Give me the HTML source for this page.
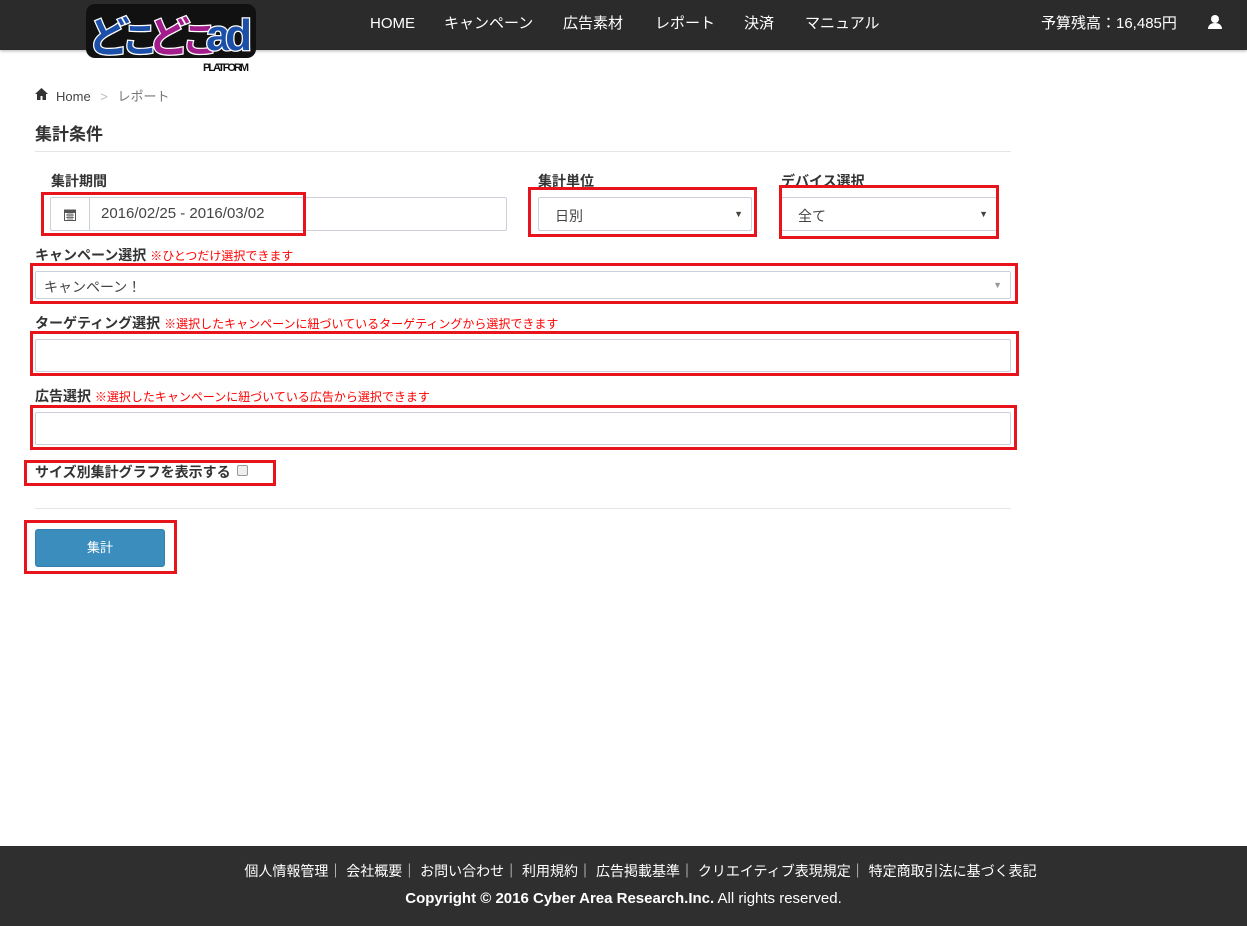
<!DOCTYPE html>
<html><head><meta charset="utf-8"><style>
*{box-sizing:border-box;margin:0;padding:0}
body{width:1247px;height:926px;position:relative;background:#fff;font-family:"Liberation Sans","Noto Sans CJK JP",sans-serif;color:#333;overflow:hidden}
.a{position:absolute}
.hdr{left:0;top:0;width:1247px;height:50px;background:#2b2b2b;box-shadow:0 1px 3px rgba(0,0,0,.3)}
.nav{top:13px;color:#fff;font-size:15px;line-height:22px}
.red{position:absolute;border:3px solid #e8141c}
.inp{position:absolute;border:1px solid #ccd0da;background:#fff;border-radius:2px}
.lbl{position:absolute;font-size:14px;font-weight:bold;color:#333;line-height:18px}
.note{color:#f00;font-weight:normal;font-size:12px}
.sel{font-size:14px;color:#444;padding:8px 0 0 16px}
.arr{position:absolute;right:8px;top:11px;font-size:9px;color:#444}
.ft{left:0;top:846px;width:1247px;height:80px;background:#2f2f2f;color:#fff;text-align:center}
</style></head><body>
<div class="a hdr"></div>
<div class="a" style="left:86px;top:2px;width:170px;height:72px">
<svg width="170" height="72" viewBox="0 0 170 72">
<rect x="0" y="2" width="170" height="54" rx="9" fill="#111"/>
<text x="2" y="50" font-family="Liberation Sans,Noto Sans CJK JP,sans-serif" font-size="42" font-weight="bold" fill="#1c4fa8" stroke="#fff" stroke-width="2.5" paint-order="stroke">ど</text>
<text x="36" y="50" font-family="Liberation Sans,Noto Sans CJK JP,sans-serif" font-size="36" font-weight="bold" fill="#1c4fa8" stroke="#fff" stroke-width="2.5" paint-order="stroke">こ</text>
<text x="62" y="50" font-family="Liberation Sans,Noto Sans CJK JP,sans-serif" font-size="42" font-weight="bold" fill="#a21c8c" stroke="#fff" stroke-width="2.5" paint-order="stroke">ど</text>
<text x="96" y="50" font-family="Liberation Sans,Noto Sans CJK JP,sans-serif" font-size="36" font-weight="bold" fill="#a21c8c" stroke="#fff" stroke-width="2.5" paint-order="stroke">こ</text>
<text x="120" y="48" font-family="Liberation Sans,sans-serif" font-size="44" font-weight="bold" fill="#1c4fa8" stroke="#fff" stroke-width="2.5" paint-order="stroke" textLength="46">ad</text>
<text x="117" y="69" font-family="Liberation Sans,sans-serif" font-size="11" font-weight="bold" fill="#111" textLength="46">PLATFORM</text>
</svg></div>
<div class="a nav" style="left:370px">HOME</div>
<div class="a nav" style="left:444px">キャンペーン</div>
<div class="a nav" style="left:563px">広告素材</div>
<div class="a nav" style="left:655px">レポート</div>
<div class="a nav" style="left:744px">決済</div>
<div class="a nav" style="left:805px">マニュアル</div>
<div class="a nav" style="left:1041px;font-size:15px">予算残高：16,485円</div>
<svg class="a" style="left:1207px;top:14px" width="16" height="16" viewBox="0 0 16 16"><circle cx="8" cy="5" r="4" fill="#fff"/><path d="M1 15c0-4 3-6 7-6s7 2 7 6z" fill="#fff"/></svg>

<svg class="a" style="left:35px;top:88px" width="13" height="12" viewBox="0 0 13 12"><path d="M6.5 0L0 6h2v6h3.5V8h2v4H11V6h2z" fill="#333"/></svg>
<div class="a" style="left:56px;top:86px;font-size:13px;color:#444">Home <span style="color:#bbb;margin:0 6px">&gt;</span> <span style="color:#777">レポート</span></div>
<div class="a" style="left:35px;top:120px;font-size:17px;font-weight:bold">集計条件</div>
<div class="a" style="left:35px;top:151px;width:976px;border-top:1px solid #e5e5e5"></div>

<div class="lbl" style="left:51px;top:172px">集計期間</div>
<div class="inp" style="left:50px;top:197px;width:457px;height:34px"><div style="position:absolute;left:38px;top:0;bottom:0;border-left:1px solid #ccd0da"></div>
<svg style="position:absolute;left:13px;top:10px" width="12" height="13" viewBox="0 0 12 13"><rect x="0.5" y="2" width="11" height="10.5" fill="none" stroke="#555"/><rect x="0" y="2" width="12" height="3" fill="#555"/><path d="M2 7h8M2 9.5h8M4 5v7M6 5v7M8 5v7" stroke="#555" stroke-width=".8"/></svg>
<div style="position:absolute;left:50px;top:7px;font-size:15px;color:#444">2016/02/25 - 2016/03/02</div></div>
<div class="lbl" style="left:538px;top:172px">集計単位</div>
<div class="inp sel" style="left:538px;top:197px;width:214px;height:34px">日別<span class="arr">▼</span></div>
<div class="lbl" style="left:781px;top:172px">デバイス選択</div>
<div class="inp sel" style="left:781px;top:197px;width:216px;height:34px">全て<span class="arr">▼</span></div>

<div class="lbl" style="left:35px;top:246px">キャンペーン選択 <span class="note">※ひとつだけ選択できます</span></div>
<div class="inp" style="left:35px;top:271px;width:976px;height:28px;font-size:14px;color:#444;padding:5px 0 0 8px">キャンペーン！<span class="arr" style="top:8px;color:#999">▼</span></div>
<div class="lbl" style="left:35px;top:314px">ターゲティング選択 <span class="note">※選択したキャンペーンに紐づいているターゲティングから選択できます</span></div>
<div class="inp" style="left:35px;top:339px;width:976px;height:33px"></div>
<div class="lbl" style="left:35px;top:387px">広告選択 <span class="note">※選択したキャンペーンに紐づいている広告から選択できます</span></div>
<div class="inp" style="left:35px;top:412px;width:976px;height:33px"></div>
<div class="lbl" style="left:35px;top:463px;font-size:14px">サイズ別集計グラフを表示する</div>
<div class="a" style="left:237px;top:465px;width:11px;height:11px;border:1px solid #999;border-radius:2px;background:#eee"></div>
<div class="a" style="left:35px;top:508px;width:976px;border-top:1px solid #e5e5e5"></div>
<div class="a" style="left:35px;top:529px;width:130px;height:38px;background:#3b8dbd;border:1px solid #367fa9;border-radius:3px;color:#fff;font-size:13px;text-align:center;line-height:36px">集計</div>

<div class="red" style="left:41px;top:192px;width:265px;height:44px"></div>
<div class="red" style="left:528px;top:187px;width:229px;height:50px"></div>
<div class="red" style="left:779px;top:185px;width:220px;height:54px"></div>
<div class="red" style="left:30px;top:263px;width:988px;height:41px"></div>
<div class="red" style="left:30px;top:331px;width:989px;height:45px"></div>
<div class="red" style="left:30px;top:405px;width:987px;height:45px"></div>
<div class="red" style="left:24px;top:460px;width:252px;height:26px"></div>
<div class="red" style="left:24px;top:520px;width:153px;height:54px"></div>

<div class="a ft"><div style="margin-top:15px;font-size:14px;padding-left:34px">個人情報管理｜ 会社概要｜ お問い合わせ｜ 利用規約｜ 広告掲載基準｜ クリエイティブ表現規定｜ 特定商取引法に基づく表記</div>
<div style="margin-top:9px;font-size:15px;padding-left:0"><b>Copyright © 2016 Cyber Area Research.Inc.</b> All rights reserved.</div></div>
</body></html>
